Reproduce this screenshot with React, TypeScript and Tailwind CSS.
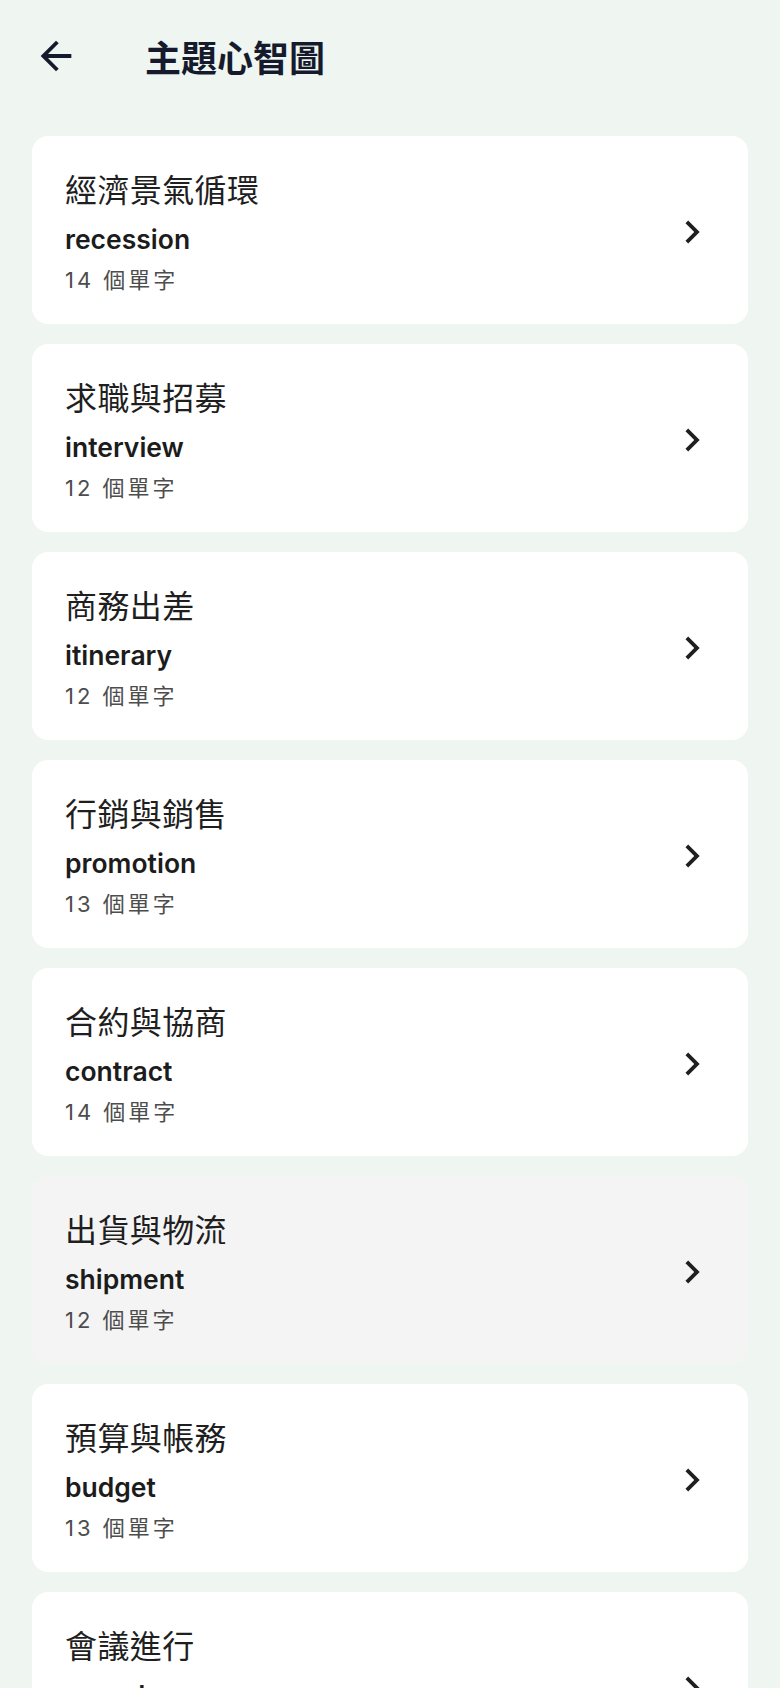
import React from 'react';

type Topic = { title: string; word: string; count: number; pressed?: boolean };

const topics: Topic[] = [
  { title: '經濟景氣循環', word: 'recession', count: 14 },
  { title: '求職與招募', word: 'interview', count: 12 },
  { title: '商務出差', word: 'itinerary', count: 12 },
  { title: '行銷與銷售', word: 'promotion', count: 13 },
  { title: '合約與協商', word: 'contract', count: 14 },
  { title: '出貨與物流', word: 'shipment', count: 12, pressed: true },
  { title: '預算與帳務', word: 'budget', count: 13 },
  { title: '會議進行', word: 'agenda', count: 12 },
];

const cjk = "font-['Noto_Sans_CJK_TC','Noto_Sans',sans-serif]";
const latin = "font-['Inter','Noto_Sans_CJK_TC',sans-serif]";

function TopicCard({ topic }: { topic: Topic }) {
  return (
    <button
      type="button"
      className={`flex w-full items-center rounded-[16px] pl-[33px] pr-[33px] pt-[32px] pb-[28px] text-left ${
        topic.pressed ? 'bg-[#f4f4f4]' : 'bg-white'
      }`}
    >
      <div className="flex-1">
        <div className={`${cjk} text-[32px] leading-[40px] tracking-[0.4px] text-[#1f1f1f]`}>{topic.title}</div>
        <div className={`${latin} mt-[14px] text-[26.5px] font-semibold leading-[34px] text-[#1c1c1c]`}>
          {topic.word}
        </div>
        <div className={`${latin} mt-[8px] text-[22px] leading-[32px] tracking-[3px] text-[#4d4d4d]`}>
          {topic.count} 個單字
        </div>
      </div>
      <svg width="46" height="46" viewBox="0 0 24 24" className="shrink-0" fill="#1f1f1f">
        <path d="M10 6 8.59 7.41 13.17 12l-4.58 4.59L10 18l6-6z" />
      </svg>
    </button>
  );
}

export default function App() {
  return (
    <div className="min-h-screen bg-[#eff5f1]">
      <header className="flex h-[112px] items-center pl-[33px]">
        <svg width="46" height="46" viewBox="0 0 24 24" fill="#151b2c">
          <path d="M20 11H7.83l5.59-5.59L12 4l-8 8 8 8 1.41-1.41L7.83 13H20v-2z" />
        </svg>
        <h1 className={`${cjk} ml-[66px] text-[36px] font-bold leading-none text-[#151b2c]`}>主題心智圖</h1>
      </header>
      <main className="flex flex-col gap-[20px] px-[32px] pt-[24px] pb-[32px]">
        {topics.map((t) => (
          <TopicCard key={t.title} topic={t} />
        ))}
      </main>
    </div>
  );
}
